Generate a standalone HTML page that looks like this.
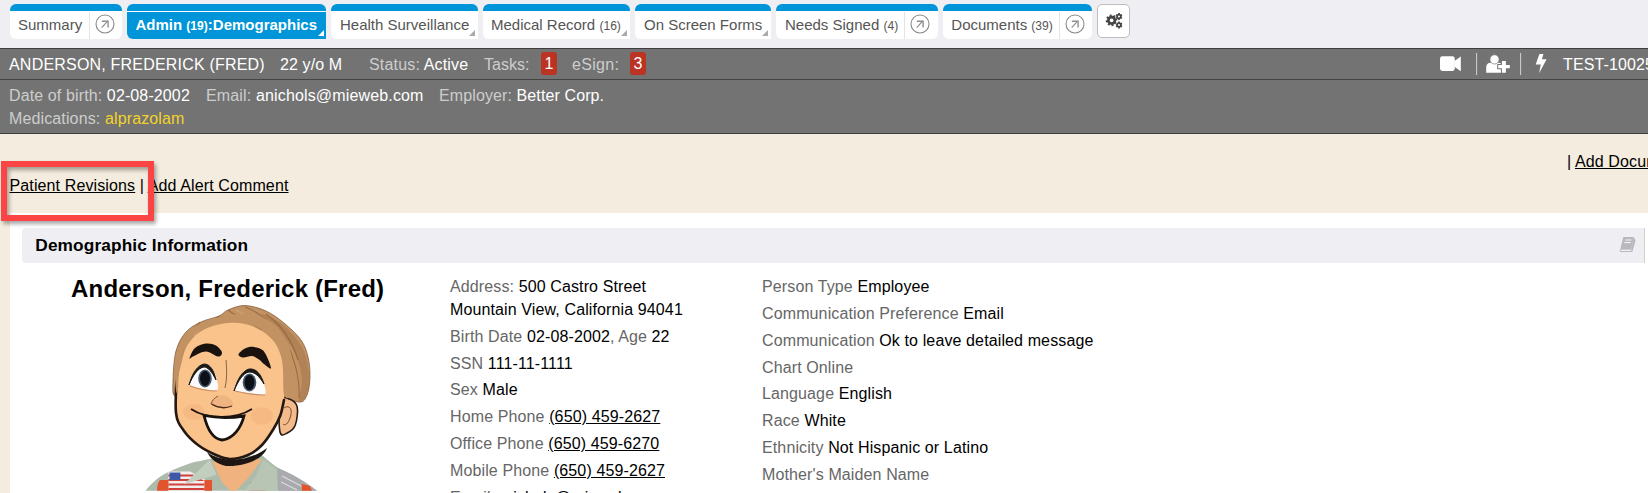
<!DOCTYPE html>
<html><head><meta charset="utf-8">
<style>
*{box-sizing:border-box}
html,body{margin:0;padding:0}
body{width:1648px;height:493px;overflow:hidden;position:relative;background:#efeef3;font-family:"Liberation Sans",sans-serif;font-size:16px;color:#000;letter-spacing:0.12px}
.a{position:absolute;white-space:pre;line-height:20px}
.tab{position:absolute;top:4px;height:35px;background:#fff;border-top:7px solid #0095d8;border-radius:6px}
.tab.sq{border-bottom-right-radius:0}
.tab .t{position:absolute;top:4px;font-size:15px;line-height:20px;color:#555;white-space:pre;letter-spacing:0}
.tab .t small{font-size:12.1px}
.tab .dv{position:absolute;top:1px;bottom:0;width:1px;background:#e4e4e4}
.tab .tri{position:absolute;width:0;height:0;border-style:solid;border-width:0 0 6px 6px;border-color:transparent transparent #aaa transparent}
.circ{position:absolute;top:3.35px;width:20px;height:20px}
#hdr{position:absolute;left:0;top:48px;width:1648px;height:86px;background:#737373;border-top:1px solid #3e3e3e;border-bottom:1px solid #3e3e3e}
#hdr .ln{position:absolute;left:0;top:30px;width:1648px;height:1px;background:#444}
.lb{color:#cdcdcd}
.wh{color:#fff}
.badge{position:absolute;top:3px;height:23px;width:16px;background:#bb3322;border-radius:3px;color:#fff;text-align:center;line-height:23px;letter-spacing:0}
#cream{position:absolute;left:0;top:134px;width:1648px;height:79px;background:#f4ecde}
#lcol{position:absolute;left:0;top:213px;width:10px;height:280px;background:#f4ecde}
.u{text-decoration:underline}
#sec{position:absolute;left:22px;top:228px;width:1623px;height:35px;background:#efeff3;border-radius:4px 0 0 4px;border-right:1px solid #d0d0d0}
.g{color:#666}
#white{position:absolute;left:10px;top:213px;width:1638px;height:280px;background:#fff}
#redbox{position:absolute;left:1px;top:161px;width:153px;height:60px;border:6px solid #fb4545;box-shadow:2px 3px 4px rgba(0,0,0,.35), inset 2px 3px 4px rgba(0,0,0,.35)}
.col{position:absolute;white-space:nowrap;line-height:22.86px}
.col div{margin-bottom:4px}
.sep{position:absolute;top:5px;width:1px;height:22px;background:#c6c6c6}
</style></head><body>

<div class="tab" style="left:10px;width:112px">
  <span class="t" style="left:8px">Summary</span>
  <div class="dv" style="left:79px"></div>
  <svg class="circ" style="left:85.3px" viewBox="0 0 20 20"><circle cx="10" cy="10" r="9" fill="none" stroke="#8a8a8a" stroke-width="1.1"/><path d="M6.7 13.6 L12.9 6.9" fill="none" stroke="#8a8a8a" stroke-width="1.1"/><path d="M6.8 7.2 H13.1 V13.6" fill="none" stroke="#8f8f8f" stroke-width="1.4"/></svg>
</div>
<div class="tab sq" style="left:127px;width:199px;background:#0095d8">
  <div style="position:absolute;left:0;right:0;top:0;height:1px;background:#fff"></div>
  <span class="t" style="left:8.5px;color:#fff;font-weight:bold">Admin <small>(19)</small>:Demographics</span>
  <div class="tri" style="right:2px;bottom:3px;border-color:transparent transparent #fff transparent"></div>
</div>
<div class="tab sq" style="left:331px;width:147px">
  <span class="t" style="left:9px">Health Surveillance</span>
  <div class="tri" style="right:3px;bottom:3px"></div>
</div>
<div class="tab sq" style="left:483px;width:147px">
  <span class="t" style="left:8px">Medical Record <small>(16)</small></span>
  <div class="tri" style="right:3px;bottom:3px"></div>
</div>
<div class="tab sq" style="left:635px;width:136px">
  <span class="t" style="left:9px">On Screen Forms</span>
  <div class="tri" style="right:3px;bottom:3px"></div>
</div>
<div class="tab" style="left:776px;width:162px">
  <span class="t" style="left:9px">Needs Signed <small>(4)</small></span>
  <div class="dv" style="left:128px"></div>
  <svg class="circ" style="left:134.3px" viewBox="0 0 20 20"><circle cx="10" cy="10" r="9" fill="none" stroke="#8a8a8a" stroke-width="1.1"/><path d="M6.7 13.6 L12.9 6.9" fill="none" stroke="#8a8a8a" stroke-width="1.1"/><path d="M6.8 7.2 H13.1 V13.6" fill="none" stroke="#8f8f8f" stroke-width="1.4"/></svg>
</div>
<div class="tab" style="left:943px;width:149px">
  <span class="t" style="left:8.3px">Documents <small>(39)</small></span>
  <div class="dv" style="left:116px"></div>
  <svg class="circ" style="left:122.3px" viewBox="0 0 20 20"><circle cx="10" cy="10" r="9" fill="none" stroke="#8a8a8a" stroke-width="1.1"/><path d="M6.7 13.6 L12.9 6.9" fill="none" stroke="#8a8a8a" stroke-width="1.1"/><path d="M6.8 7.2 H13.1 V13.6" fill="none" stroke="#8f8f8f" stroke-width="1.4"/></svg>
</div>
<div style="position:absolute;left:1097px;top:4px;width:33px;height:34px;background:#fff;border:1px solid #bdbdbd;border-radius:5px">
  <svg style="position:absolute;left:0;top:0" width="31" height="32" viewBox="1098 5 31 32">
    <path fill-rule="evenodd" fill="#454545" d="M1116.11 21.21 L1115.88 21.99 L1117.00 22.68 L1115.84 24.40 L1114.78 23.63 L1114.14 24.13 L1113.43 24.52 L1113.73 25.80 L1111.69 26.20 L1111.49 24.90 L1110.69 24.81 L1109.91 24.58 L1109.22 25.70 L1107.50 24.54 L1108.27 23.48 L1107.77 22.84 L1107.38 22.13 L1106.10 22.43 L1105.70 20.39 L1107.00 20.19 L1107.09 19.39 L1107.32 18.61 L1106.20 17.92 L1107.36 16.20 L1108.42 16.97 L1109.06 16.47 L1109.77 16.08 L1109.47 14.80 L1111.51 14.40 L1111.71 15.70 L1112.51 15.79 L1113.29 16.02 L1113.98 14.90 L1115.70 16.06 L1114.93 17.12 L1115.43 17.76 L1115.82 18.47 L1117.10 18.17 L1117.50 20.21 L1116.20 20.41Z M1113.50 20.30 A1.9 1.9 0 1 0 1109.70 20.30 A1.9 1.9 0 1 0 1113.50 20.30Z M1121.75 16.50 L1121.69 17.07 L1122.38 17.41 L1121.47 18.97 L1120.84 18.54 L1120.38 18.88 L1119.85 19.12 L1119.91 19.88 L1118.09 19.88 L1118.15 19.12 L1117.62 18.88 L1117.16 18.54 L1116.53 18.97 L1115.62 17.41 L1116.31 17.07 L1116.25 16.50 L1116.31 15.93 L1115.62 15.59 L1116.53 14.03 L1117.16 14.46 L1117.62 14.12 L1118.15 13.88 L1118.09 13.12 L1119.91 13.12 L1119.85 13.88 L1120.38 14.12 L1120.84 14.46 L1121.47 14.03 L1122.38 15.59 L1121.69 15.93Z M1120.00 16.50 A1.0 1.0 0 1 0 1118.00 16.50 A1.0 1.0 0 1 0 1120.00 16.50Z M1121.75 25.00 L1121.69 25.57 L1122.38 25.91 L1121.47 27.47 L1120.84 27.04 L1120.38 27.38 L1119.85 27.62 L1119.91 28.38 L1118.09 28.38 L1118.15 27.62 L1117.62 27.38 L1117.16 27.04 L1116.53 27.47 L1115.62 25.91 L1116.31 25.57 L1116.25 25.00 L1116.31 24.43 L1115.62 24.09 L1116.53 22.53 L1117.16 22.96 L1117.62 22.62 L1118.15 22.38 L1118.09 21.62 L1119.91 21.62 L1119.85 22.38 L1120.38 22.62 L1120.84 22.96 L1121.47 22.53 L1122.38 24.09 L1121.69 24.43Z M1120.00 25.00 A1.0 1.0 0 1 0 1118.00 25.00 A1.0 1.0 0 1 0 1120.00 25.00Z"/>
  </svg>
</div>

<div id="hdr">
  <div class="ln"></div>
  <span class="a wh" style="left:9px;top:6px;letter-spacing:0.2px">ANDERSON, FREDERICK (FRED)</span>
  <span class="a wh" style="left:280px;top:6px">22 y/o M</span>
  <span class="a" style="left:369px;top:6px;letter-spacing:0.17px"><span class="lb">Status:</span><span class="wh"> Active</span></span>
  <span class="a lb" style="left:484px;top:6px;letter-spacing:0">Tasks:</span>
  <div class="badge" style="left:541px">1</div>
  <span class="a lb" style="left:572px;top:6px;letter-spacing:0.3px">eSign:</span>
  <div class="badge" style="left:630px">3</div>
  <svg style="position:absolute;left:0;top:-49px" width="1648" height="130" viewBox="0 0 1648 130">
    <rect x="1440" y="56.3" width="14.8" height="14.7" rx="2.4" fill="#fff"/>
    <path d="M1454.4 61 L1460.8 56.6 L1460.8 71.2 L1454.4 66.8Z" fill="#fff"/>
    <rect x="1476" y="53" width="1.1" height="22" fill="#c8c8c8"/>
    <path d="M1486.2 72.7 L1486.2 67 C1486.2 64.5 1488 62.8 1490.5 62.8 L1498.5 62.8 C1501 62.8 1502.5 64.5 1502.5 67 L1502.5 72.7Z" fill="#fff"/>
    <circle cx="1494.5" cy="59.4" r="4.6" fill="#fff" stroke="#737373" stroke-width="0.7"/>
    <path d="M1500.9 60.1 H1506.9 V64 H1510.8 V69.2 H1506.9 V73.7 H1500.9 V69.2 H1497.2 V64 H1500.9Z" fill="#737373"/>
    <path d="M1501.9 61.1 H1505.9 V65 H1509.8 V68.2 H1505.9 V72.7 H1501.9 V68.2 H1498.2 V65 H1501.9Z" fill="#fff"/>
    <rect x="1520" y="53" width="1.1" height="22" fill="#c8c8c8"/>
    <path d="M1539.4 54.1 L1543.4 54.1 L1541.9 59.3 L1546.6 59.3 L1539.1 73.3 L1540.8 64.6 L1535.7 64.6Z" fill="#fff"/>
  </svg>
  <span class="a wh" style="left:1563px;top:6px;letter-spacing:0.12px">TEST-10025</span>
  <span class="a" style="left:9px;top:37px;letter-spacing:0.12px"><span class="lb">Date of birth:</span><span class="wh"> 02-08-2002</span></span>
  <span class="a" style="left:206px;top:37px;letter-spacing:0.15px"><span class="lb">Email:</span><span class="wh"> anichols@mieweb.com</span></span>
  <span class="a" style="left:439px;top:37px;letter-spacing:0.11px"><span class="lb">Employer:</span><span class="wh"> Better Corp.</span></span>
  <span class="a" style="left:9px;top:60px;letter-spacing:0.13px"><span class="lb">Medications:</span><span style="color:#f2d22c"> alprazolam</span></span>
</div>

<div id="white"></div>
<div id="cream"></div>
<div id="lcol"></div>
<span class="a" style="left:1567px;top:152px">| <span class="u">Add Document</span></span>
<span class="a" style="left:9.5px;top:176px"><span class="u">Patient Revisions</span> | <span class="u">Add Alert Comment</span></span>
<div id="redbox"></div>

<div id="sec">
  <span class="a" style="left:13.3px;top:6.5px;font-weight:bold;font-size:17.27px">Demographic Information</span>
  <svg style="position:absolute;left:0;top:0" width="1622" height="35" viewBox="22 228 1622 35">
    <path d="M1623.3 237 L1633.9 237 L1631.2 249.6 L1620.2 249.6Z" fill="#b9b9bd"/>
    <path d="M1633.9 237 L1635.6 240.5 L1632.3 252 L1621 252 C1619.5 252 1619.3 250.4 1620.2 249.6 L1631.2 249.6Z" fill="#b9b9bd"/>
    <path d="M1620.8 250.4 L1631.3 250.4" stroke="#fff" stroke-width="0.9"/>
    <path d="M1625.2 240 H1631.5 M1624.3 242.6 H1630.8" stroke="#fff" stroke-width="0.9"/>
  </svg>
</div>
<span class="a" style="left:71px;top:275.3px;font-weight:bold;font-size:24px;line-height:28px;letter-spacing:0.2px">Anderson, Frederick (Fred)</span>
<svg style="position:absolute;left:140px;top:300px" width="190" height="193" viewBox="140 300 190 193">
<path d="M145.5 490.8 C152 482 162 474 173 470 C182 466 192 462 200 461 L214 458 L262 455 C268 460 274 466 280 469 C292 474 306 482 317 490.8Z" fill="#adbcaa"/>
<path d="M277.6 468 C290 473 306 482 317 490.8 L278 490.8Z" fill="#a9aaae"/>
<path d="M282 476 L305 488 M281 482 L297 490" stroke="#dcdcdc" stroke-width="1.3"/>
<path d="M301.6 484 L310 486 L312 490.8 L302 490.8Z" fill="#e3532d"/>
<path d="M168.4 471.4 L190.2 471.4 L205.5 480 L204.4 490.8 L168.4 490.8Z" fill="#f2eeee"/>
<path d="M168.4 474.5 L193 474.5 L196 476.5 L168.4 476.5Z M168.4 479 L201 479 L204.5 481 L168.4 481Z M168.4 483.5 L204.5 483.5 L204.4 485.5 L168.4 485.5Z M168.4 488 L204.4 488 L204.4 490 L168.4 490Z" fill="#d2403c"/>
<path d="M169.5 472.5 L180.4 472.5 L180.4 480 L169.5 480Z" fill="#3c5aa8"/>
<path d="M157 490.8 C157 486 158 482 160 480 L168.4 480 L168.4 490.8Z" fill="#e3532d"/>
<path d="M204.4 480 L212 480 L212 490.8 L204.4 490.8Z" fill="#e3532d"/>
<path d="M250.3 482.3 L265.6 482.3 L265.6 490.8 L250.3 490.8Z" fill="#e3532d"/>
<path d="M183.7 484.5 L209.9 459.4 L216.5 474.7Z" fill="#c2cebf"/>
<path d="M263.4 459.4 L276.5 469.2 L277.6 490.8 L243.8 490.8 L255.8 476.8Z" fill="#b8c5b4"/>
<path d="M212 462 L262.3 459 L249.2 476.8 L236.1 490.8 L230.7 490.8 L223 483.4Z" fill="#f0b27e"/>
<path d="M207 452 C220 462 246 464 267 448 C264 458 246 467 226 466 C216 464 210 458 207 452Z" fill="#1e1612"/>
<path d="M175.0 396.0 C172.2 395.3 172.8 388.5 173.0 381.0 C173.2 373.5 173.8 359.2 176.0 351.0 C178.2 342.8 181.8 336.8 186.0 332.0 C190.2 327.2 195.5 324.7 201.0 322.0 C206.5 319.3 214.5 318.0 219.0 316.0 C223.5 314.0 223.7 311.8 228.0 310.0 C232.3 308.2 238.7 305.3 245.0 305.5 C251.3 305.7 259.5 308.1 266.0 311.0 C272.5 313.9 278.2 318.2 284.0 323.0 C289.8 327.8 297.0 334.3 301.0 340.0 C305.0 345.7 306.5 350.8 308.0 357.0 C309.5 363.2 310.2 370.7 310.0 377.0 C309.8 383.3 309.0 390.8 307.0 395.0 C305.0 399.2 304.2 402.8 298.0 402.0 C291.8 401.2 281.3 395.3 270.0 390.0 C258.7 384.7 243.3 370.8 230.0 370.0 C216.7 369.2 199.2 380.7 190.0 385.0 C180.8 389.3 177.8 396.7 175.0 396.0Z" fill="#c29263" stroke="#7a5232" stroke-width="1" stroke-opacity=".7"/>
<path d="M262.0 314.0 C263.3 313.5 276.0 319.5 282.0 324.0 C288.0 328.5 294.0 335.5 298.0 341.0 C302.0 346.5 304.2 351.0 306.0 357.0 C307.8 363.0 308.8 370.7 309.0 377.0 C309.2 383.3 308.7 391.0 307.0 395.0 C305.3 399.0 299.8 403.5 299.0 401.0 C298.2 398.5 302.3 387.2 302.0 380.0 C301.7 372.8 299.3 364.3 297.0 358.0 C294.7 351.7 291.8 347.2 288.0 342.0 C284.2 336.8 278.3 331.7 274.0 327.0 C269.7 322.3 260.7 314.5 262.0 314.0Z" fill="#9a6c45" opacity=".4"/>
<path d="M228 310 C238 318 252 322 262 330 M245 307 C258 312 272 322 280 336 M200 322 C192 330 185 342 181 356 M266 314 C280 324 292 340 298 360 M290 350 C296 366 300 380 299 398 M220 316 C214 320 205 324 197 330" fill="none" stroke="#8a5c38" stroke-width="1.1" opacity=".7"/>
<path d="M236 310 C244 314 250 318 256 324 M212 320 C206 324 200 328 194 336" fill="none" stroke="#d2a878" stroke-width="1.4" opacity=".7"/>

<path d="M280.0 401.0 C281.6 395.5 286.4 398.0 289.3 399.0 C292.2 400.0 296.2 402.7 297.2 407.0 C298.2 411.3 296.9 420.7 295.3 425.0 C293.7 429.3 289.9 431.8 287.3 433.0 C284.8 434.2 281.2 437.3 280.0 432.0 C278.8 426.7 278.4 406.5 280.0 401.0Z" fill="#f3bb8b" stroke="#2a1c14" stroke-width="1.6"/>
<path d="M284 408 C290 404 293 410 290 418 C288 424 285 426 283 424" fill="none" stroke="#7a4a2a" stroke-width="1"/>
<path d="M177.0 385.0 C176.2 393.0 174.8 405.3 176.0 413.0 C177.2 420.7 180.3 425.7 184.0 431.0 C187.7 436.3 192.7 441.0 198.0 445.0 C203.3 449.0 210.7 452.7 216.0 455.0 C221.3 457.3 224.7 459.0 230.0 459.0 C235.3 459.0 242.7 457.3 248.0 455.0 C253.3 452.7 257.8 449.3 262.0 445.0 C266.2 440.7 270.4 434.0 273.5 429.0 C276.6 424.0 278.8 419.8 280.5 415.0 C282.2 410.2 283.4 405.8 284.0 400.0 C284.6 394.2 284.3 386.7 284.0 380.0 C283.7 373.3 283.5 366.2 282.0 360.0 C280.5 353.8 278.3 347.8 275.0 343.0 C271.7 338.2 267.0 334.2 262.0 331.0 C257.0 327.8 250.7 325.3 245.0 324.0 C239.3 322.7 233.8 322.5 228.0 323.0 C222.2 323.5 215.3 325.0 210.0 327.0 C204.7 329.0 200.0 331.5 196.0 335.0 C192.0 338.5 188.5 343.0 186.0 348.0 C183.5 353.0 182.5 358.8 181.0 365.0 C179.5 371.2 177.8 377.0 177.0 385.0Z" fill="#fac38b"/>
<path d="M177.0 372.0 C176.8 378.8 174.8 403.2 176.0 413.0 C177.2 422.8 180.3 425.7 184.0 431.0 C187.7 436.3 192.7 441.0 198.0 445.0 C203.3 449.0 210.7 452.7 216.0 455.0 C221.3 457.3 224.7 459.0 230.0 459.0 C235.3 459.0 242.7 457.3 248.0 455.0 C253.3 452.7 257.8 449.3 262.0 445.0 C266.2 440.7 270.4 434.0 273.5 429.0 C276.6 424.0 278.8 419.8 280.5 415.0 C282.2 410.2 283.4 402.5 284.0 400.0" fill="none" stroke="#241812" stroke-width="2.6" stroke-linecap="round"/>
<path d="M176.0 390.0 C175.5 385.0 174.0 368.3 175.0 360.0 C176.0 351.7 178.5 345.7 182.0 340.0 C185.5 334.3 190.5 329.7 196.0 326.0 C201.5 322.3 206.8 320.0 215.0 318.0 C223.2 316.0 236.2 313.7 245.0 314.0 C253.8 314.3 261.5 316.3 268.0 320.0 C274.5 323.7 280.0 329.3 284.0 336.0 C288.0 342.7 291.0 350.2 292.0 360.0 C293.0 369.8 291.3 389.3 290.0 395.0 C288.7 400.7 285.2 398.2 284.0 394.0 C282.8 389.8 283.5 377.0 283.0 370.0 C282.5 363.0 282.7 357.0 281.0 352.0 C279.3 347.0 276.7 344.0 273.0 340.0 C269.3 336.0 264.3 331.0 259.0 328.0 C253.7 325.0 248.0 322.7 241.0 322.0 C234.0 321.3 224.7 322.0 217.0 324.0 C209.3 326.0 200.7 329.3 195.0 334.0 C189.3 338.7 185.7 345.7 183.0 352.0 C180.3 358.3 179.8 365.7 179.0 372.0 C178.2 378.3 178.5 387.0 178.0 390.0 C177.5 393.0 176.5 395.0 176.0 390.0Z" fill="#c29263"/>
<path d="M180 345 C200 330 215 325 240 324 C262 326 272 334 280 346 C272 336 258 331 240 331 C218 332 198 338 180 345Z" fill="#b7875a" opacity=".0"/>
<ellipse cx="194" cy="412" rx="11" ry="8" fill="#f0a274" opacity=".28"/>
<ellipse cx="262" cy="416" rx="11" ry="9" fill="#f0a274" opacity=".28"/>
<path d="M189.5 358.5 C189.7 357.2 192.2 350.5 195.0 348.0 C197.8 345.5 202.5 343.9 206.0 343.5 C209.5 343.1 213.3 344.0 216.0 345.5 C218.7 347.0 221.7 350.7 222.0 352.5 C222.3 354.3 220.7 356.7 218.0 356.5 C215.3 356.3 210.0 351.6 206.0 351.5 C202.0 351.4 196.8 354.8 194.0 356.0 C191.2 357.2 189.3 359.8 189.5 358.5Z" fill="#1a120e"/>
<path d="M238.5 354.5 C238.8 353.0 242.4 349.8 245.0 348.5 C247.6 347.2 250.8 346.5 254.0 347.0 C257.2 347.5 261.2 348.0 264.0 351.5 C266.8 355.0 271.0 365.9 271.0 368.0 C271.0 370.1 266.0 365.4 264.0 364.0 C262.0 362.6 261.0 360.8 259.0 359.5 C257.0 358.2 254.7 356.3 252.0 356.0 C249.3 355.7 245.2 357.8 243.0 357.5 C240.8 357.2 238.2 356.0 238.5 354.5Z" fill="#1a120e"/>
<path d="M189.5 384.0 C188.0 380.8 193.6 373.3 196.0 370.0 C198.4 366.7 201.3 364.3 204.0 364.0 C206.7 363.7 209.8 365.3 212.0 368.0 C214.2 370.7 216.2 376.3 217.0 380.0 C217.8 383.7 219.0 388.5 217.0 390.0 C215.0 391.5 209.6 390.0 205.0 389.0 C200.4 388.0 191.0 387.2 189.5 384.0Z" fill="#fbfbfb"/>
<path d="M234.5 390.0 C232.8 387.3 237.6 380.5 240.0 377.0 C242.4 373.5 246.0 369.8 249.0 369.0 C252.0 368.2 255.5 369.5 258.0 372.0 C260.5 374.5 262.9 380.2 264.0 384.0 C265.1 387.8 266.8 393.0 264.5 394.5 C262.2 396.0 255.0 393.8 250.0 393.0 C245.0 392.2 236.2 392.7 234.5 390.0Z" fill="#fbfbfb"/>
<ellipse cx="205" cy="378.5" rx="6.8" ry="9" fill="#44566e"/>
<ellipse cx="205" cy="378.5" rx="5" ry="7.6" fill="#0c1016"/>
<ellipse cx="249.5" cy="382.5" rx="6.8" ry="9" fill="#44566e"/>
<ellipse cx="249.5" cy="382.5" rx="5" ry="7.6" fill="#0c1016"/>
<path d="M189 385 C192 373 198 365 204 364 C210 364 214 370 216 380 C212 372 208 367 204 367 C198 368 193 375 189 385Z" fill="#1c1814" stroke="#1c1814" stroke-width="1"/>
<path d="M234 391 C237 380 242 371 249 369 C256 368 261 374 264 384 C259 376 255 372 249 372 C243 373 238 381 234 391Z" fill="#1c1814" stroke="#1c1814" stroke-width="1"/>
<path d="M190 386 C198 389 208 391 217 391" fill="none" stroke="#c98e6a" stroke-width="1.2"/>
<path d="M235 391 C243 393 254 395 265 395" fill="none" stroke="#c98e6a" stroke-width="1.2"/>
<path d="M226 360 C227 370 227 380 225 388" fill="none" stroke="#5a3a26" stroke-width="1" opacity=".7"/>
<path d="M210 404 C212 398 218 395 222 395 C228 395 233 400 233 406 C226 409 216 408 210 404Z" fill="#f0b482"/><path d="M218 396 C214 398 212 401 211 404" fill="none" stroke="#7a4a2c" stroke-width="0.9"/>
<path d="M211.5 404 C218 408 226 408.5 232 406" fill="none" stroke="#4a2c1c" stroke-width="1.3"/>
<path d="M191 409 C200 415 212 417 222 417 C234 417 244 414 252 409" fill="none" stroke="#20160f" stroke-width="2"/>
<path d="M204 415.5 C216 418 232 418 244 416 C241 428 233 439 222 440 C213 439 207 428 204 415.5Z" fill="#ffffff" stroke="#1a120c" stroke-width="2.8"/>
</svg>
<div class="col" style="left:450px;top:276px">
  <div><span class="g">Address:</span> 500 Castro Street<br>Mountain View, California 94041</div>
  <div><span class="g">Birth Date</span> 02-08-2002<span class="g">, Age</span> 22</div>
  <div><span class="g">SSN</span> 111-11-1111</div>
  <div><span class="g">Sex</span> Male</div>
  <div><span class="g">Home Phone</span> <span class="u">(650) 459-2627</span></div>
  <div><span class="g">Office Phone</span> <span class="u">(650) 459-6270</span></div>
  <div><span class="g">Mobile Phone</span> <span class="u">(650) 459-2627</span></div>
  <div><span class="g">Email:</span><span class="u">anichols@mieweb.com</span></div>
</div>
<div class="col" style="left:762px;top:276px">
  <div><span class="g">Person Type</span> Employee</div>
  <div><span class="g">Communication Preference</span> Email</div>
  <div><span class="g">Communication</span> Ok to leave detailed message</div>
  <div><span class="g">Chart Online</span></div>
  <div><span class="g">Language</span> English</div>
  <div><span class="g">Race</span> White</div>
  <div><span class="g">Ethnicity</span> Not Hispanic or Latino</div>
  <div><span class="g">Mother's Maiden Name</span></div>
</div>

</body></html>
